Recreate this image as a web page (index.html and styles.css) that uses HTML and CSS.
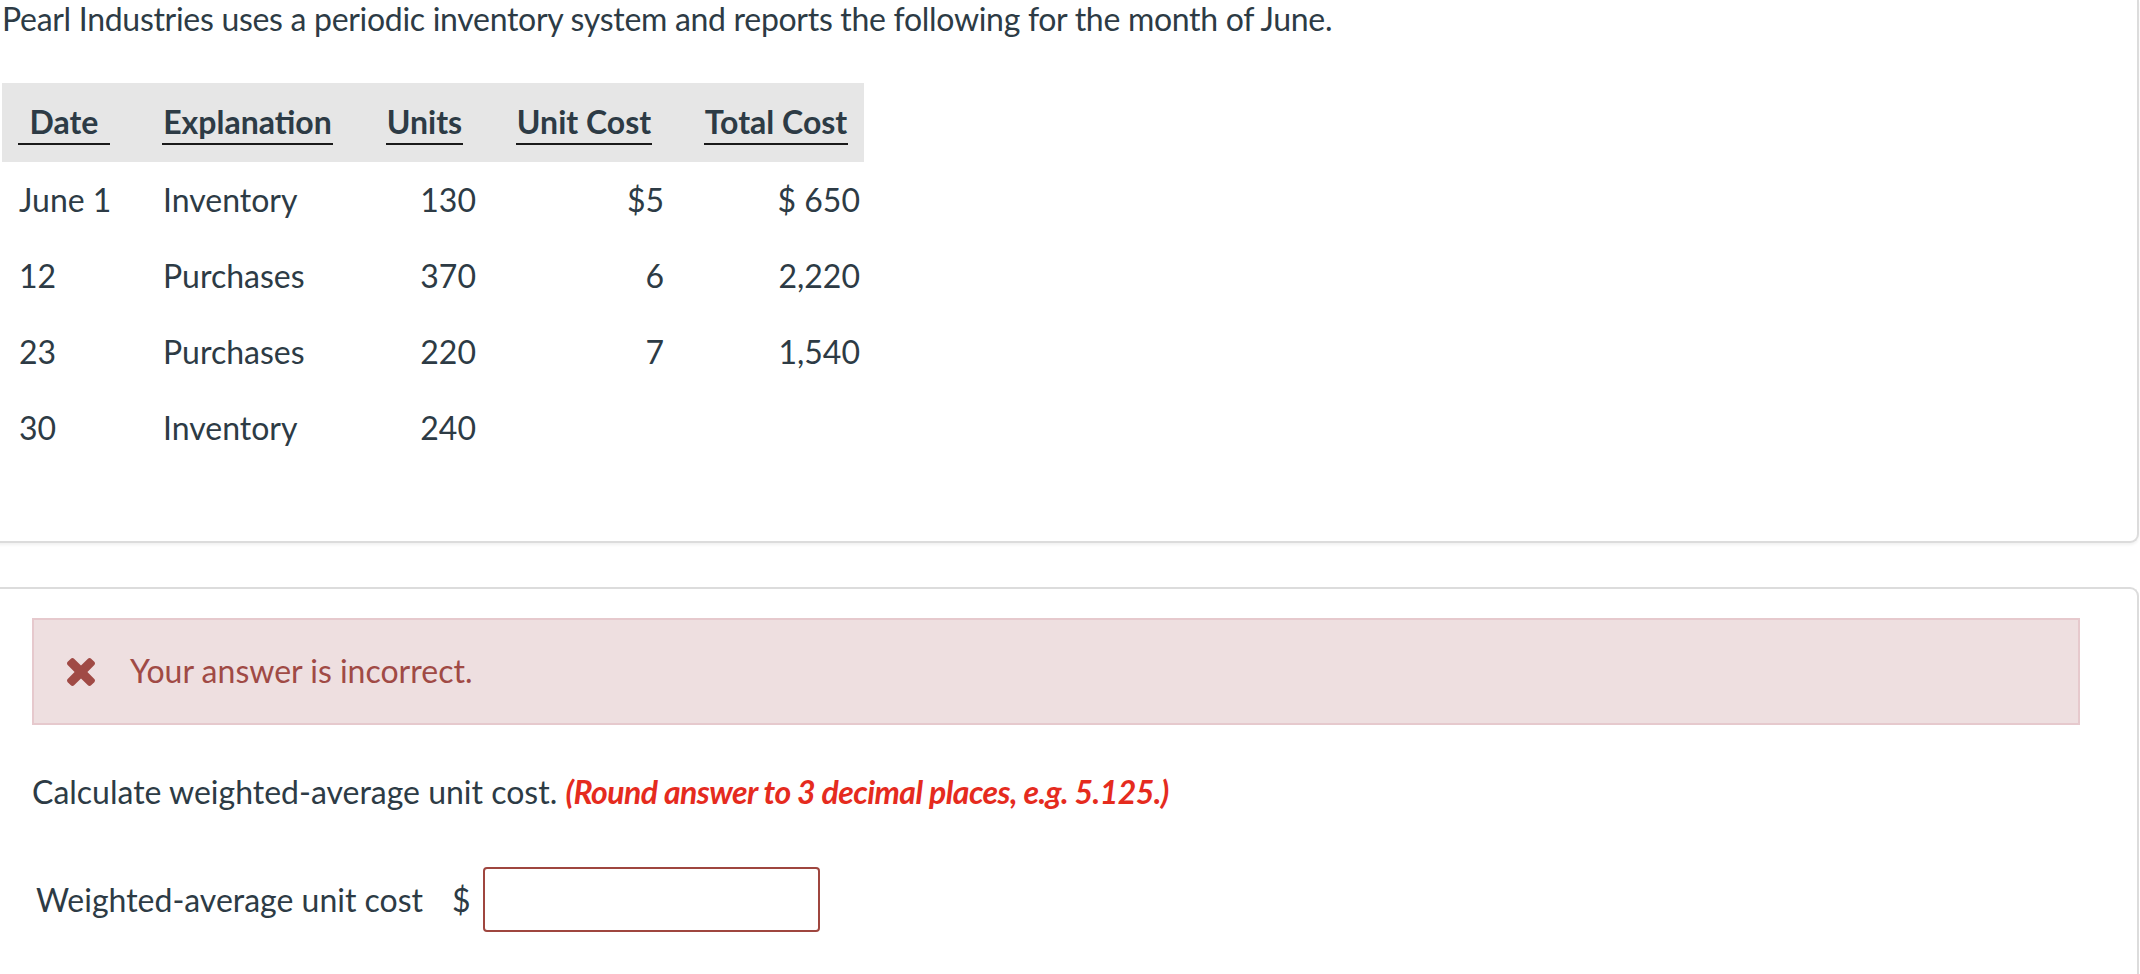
FILE: index.html
```html
<!DOCTYPE html>
<html lang="en">
<head>
<meta charset="utf-8">
<title>Weighted-average unit cost</title>
<link rel="stylesheet" href="styles.css">
</head>
<body>
<main class="page">
  <section class="card card-question">
    <p class="prompt">Pearl Industries uses a periodic inventory system and reports the following for the month of June.</p>
    <table class="inv">
      <colgroup>
        <col class="w-date"><col class="w-expl"><col class="w-units"><col class="w-ucost"><col class="w-tcost">
      </colgroup>
      <thead>
        <tr>
          <th class="c-date"><span>Date</span></th>
          <th class="c-expl"><span>Explanation</span></th>
          <th class="c-units"><span>Units</span></th>
          <th class="c-ucost"><span>Unit Cost</span></th>
          <th class="c-tcost"><span>Total Cost</span></th>
        </tr>
      </thead>
      <tbody>
        <tr>
          <td class="c-date">June 1</td>
          <td class="c-expl">Inventory</td>
          <td class="c-units num">130</td>
          <td class="c-ucost num">$5</td>
          <td class="c-tcost num">$ 650</td>
        </tr>
        <tr>
          <td class="c-date">12</td>
          <td class="c-expl">Purchases</td>
          <td class="c-units num">370</td>
          <td class="c-ucost num">6</td>
          <td class="c-tcost num">2,220</td>
        </tr>
        <tr>
          <td class="c-date">23</td>
          <td class="c-expl">Purchases</td>
          <td class="c-units num">220</td>
          <td class="c-ucost num">7</td>
          <td class="c-tcost num">1,540</td>
        </tr>
        <tr>
          <td class="c-date">30</td>
          <td class="c-expl">Inventory</td>
          <td class="c-units num">240</td>
          <td class="c-ucost num"></td>
          <td class="c-tcost num"></td>
        </tr>
      </tbody>
    </table>
  </section>

  <section class="card card-answer">
    <div class="feedback">
      <svg class="feedback-icon" viewBox="302 366 1188 1188" aria-hidden="true">
        <path d="M1490 1322q0 40-28 68l-136 136q-28 28-68 28t-68-28l-294-294-294 294q-28 28-68 28t-68-28l-136-136q-28-28-28-68t28-68l294-294-294-294q-28-28-28-68t28-68l136-136q28-28 68-28t68 28l294 294 294-294q28-28 68-28t68 28l136 136q28 28 28 68t-28 68l-294 294 294 294q28 28 28 68z"/>
      </svg>
      <span class="feedback-text">Your answer is incorrect.</span>
    </div>
    <p class="question">Calculate weighted-average unit cost. <em class="hint">(Round answer to 3 decimal places, e.g. 5.125.)</em></p>
    <div class="answer-row">
      <label class="answer-label" for="wac">Weighted-average unit cost</label>
      <span class="currency">$</span>
      <input class="answer-input" id="wac" type="text">
    </div>
  </section>
</main>
</body>
</html>
```

FILE: styles.css
```css
html, body {
  margin: 0;
  padding: 0;
  background: #ffffff;
}

body {
  font-family: "Lato", "Open Sans", "Liberation Sans", sans-serif;
  font-size: 32px;
  line-height: 1.2;
  color: #2d3b45;
  overflow: hidden;
}

.page {
  width: 2140px;
}

.card {
  margin: 0 1px 0 -10px;
  border: 2px solid #dcdcdc;
  background: #fff;
}

.card-question {
  border-top: none;
  border-radius: 0 0 9px 0;
  padding: 0 0 75px 10px;
  box-shadow: 0 2px 3px rgba(0, 0, 0, 0.06);
}

.prompt {
  margin: 0;
  line-height: 38px;
  letter-spacing: -0.3px;
}

/* table */
.inv {
  margin-top: 45px;
  border-collapse: collapse;
  border-spacing: 0;
  table-layout: fixed;
  width: 862px;
}

.w-date { width: 134px; }
.w-expl { width: 224px; }
.w-units { width: 130px; }
.w-ucost { width: 188px; }
.w-tcost { width: 186px; }

.inv thead tr {
  background: #e6e6e6;
}

.inv th {
  padding: 17px 26px;
  font-weight: 700;
  text-align: center;
  vertical-align: top;
}

.inv th span {
  display: block;
  line-height: 43px;
  border-bottom: 2px solid #1a1a1a;
  white-space: nowrap;
}

.inv th.c-date { padding-left: 16px; }
.inv th.c-expl { padding-right: 27px; }
.inv th.c-units { padding-right: 27px; }
.inv th.c-tcost { padding-right: 16px; }

.inv td {
  height: 76px;
  padding: 0 26px;
  line-height: 76px;
  white-space: nowrap;
  vertical-align: middle;
}

.inv td.c-date { padding-left: 17px; }
.inv td.c-expl { padding-left: 27px; }
.inv td.num { text-align: right; }
.inv td.c-units { padding-right: 14px; }
.inv td.c-ucost { padding-right: 14px; }
.inv td.c-tcost { padding-right: 4px; }

/* answer card */
.card-answer {
  margin-top: 44px;
  border-bottom: none;
  border-radius: 0 9px 0 0;
  padding: 29px 57px 120px 40px;
}

.feedback {
  display: flex;
  align-items: center;
  height: 103px;
  padding-left: 33px;
  background: #eedfe0;
  border: 2px solid #e6c9cd;
  color: #a04a45;
}

.feedback-icon {
  width: 28px;
  height: 28px;
  fill: #a04a45;
  flex: none;
}

.feedback-text {
  margin-left: 35px;
}

.question {
  margin: 48px 0 0;
}

.hint {
  color: #e52b1e;
  font-weight: 700;
  font-style: italic;
  letter-spacing: -0.55px;
}

.answer-row {
  display: flex;
  align-items: center;
  margin-top: 56px;
}

.answer-label {
  padding-left: 4px;
}

.currency {
  margin-left: 29px;
}

.answer-input {
  box-sizing: border-box;
  width: 337px;
  height: 65px;
  margin: 0 0 0 12px;
  border: 2px solid #9f463f;
  border-radius: 4px;
  font: inherit;
  padding: 0 10px;
  background: #fff;
  outline: none;
}
```
